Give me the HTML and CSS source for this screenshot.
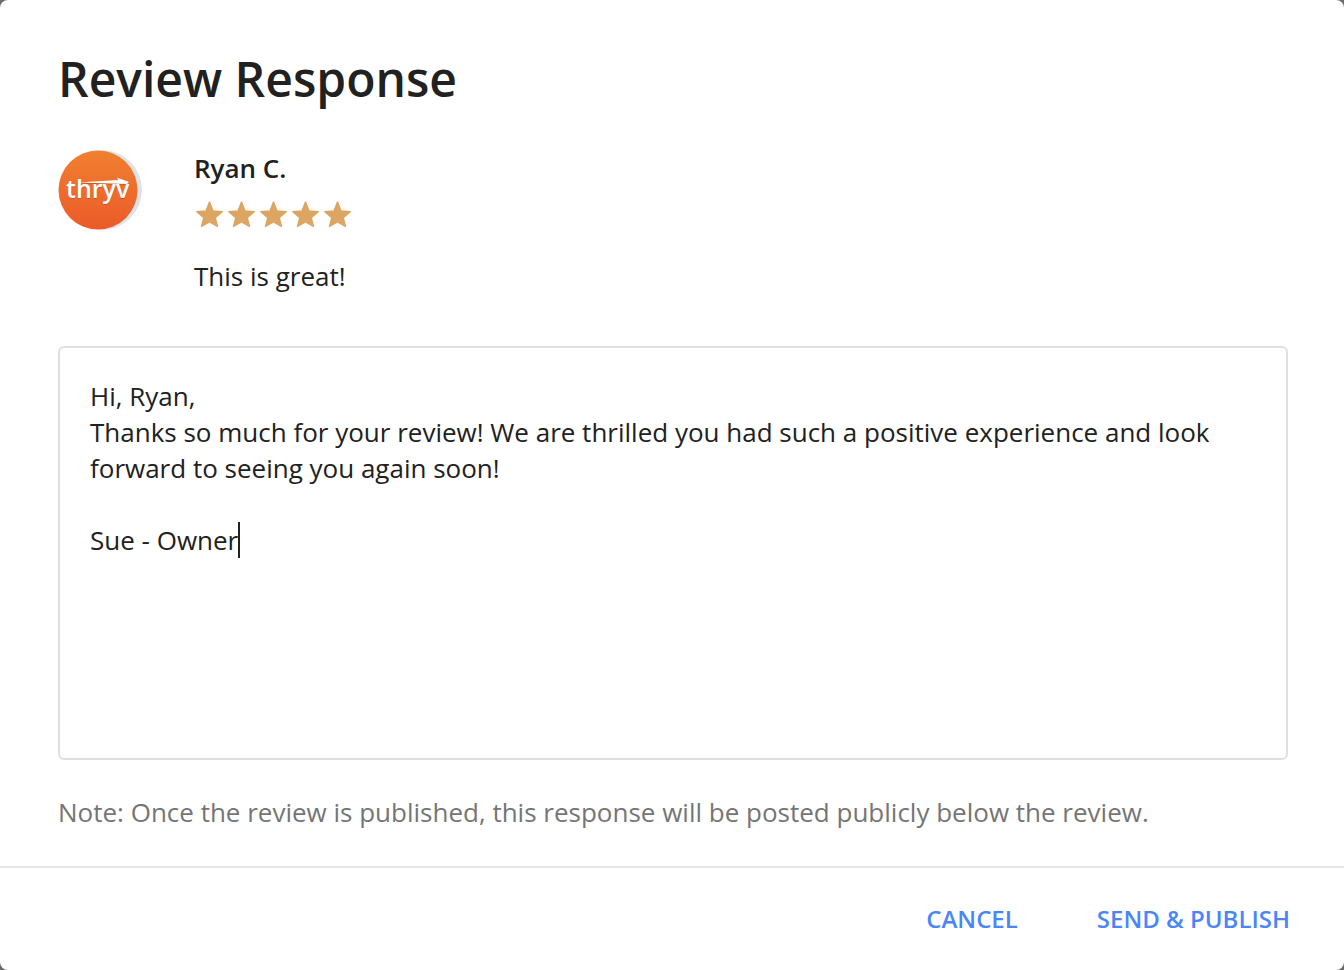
FILE: index.html
```html
<!DOCTYPE html>
<html lang="en">
<head>
<meta charset="utf-8">
<meta name="viewport" content="width=device-width, initial-scale=1">
<title>Review Response</title>
<link rel="stylesheet" href="styles.css">
</head>
<body>
<svg class="defs" aria-hidden="true">
  <symbol id="star" viewBox="0 0 32 32">
    <path d="M15.500 4 19 13 28.200 13.700 21.200 19.600 23.500 28.400 15.500 23.800 7.500 28.400 9.800 19.600 2.800 13.700 12 13Z" stroke-width="1.4" stroke-linejoin="round"/>
  </symbol>
</svg>
<form class="dialog" role="dialog" aria-labelledby="title">
  <main class="body">
    <h1 class="title" id="title">Review Response</h1>
    <section class="review">
      <svg class="avatar" viewBox="0 0 84 80" role="img" aria-label="thryv">
        <defs>
          <linearGradient id="orange" x1="0" y1="0" x2="0" y2="1">
            <stop offset="0" stop-color="#f08030"/>
            <stop offset="1" stop-color="#ec5a29"/>
          </linearGradient>
        </defs>
        <circle cx="44" cy="40" r="40" fill="#dfe3e9"/>
        <circle cx="40" cy="40" r="39.5" fill="url(#orange)"/>
        <g class="logo-shadow">
          <text class="logo-text" x="8" y="49">thryv</text>
          <path d="M20 33.500 60 31 59 28.500 71 33 69 35Z"/>
        </g>
        <g class="logo-mark">
          <text class="logo-text" x="8" y="48">thryv</text>
          <path d="M20 32.500 60 30 59 27.500 71 32 69 34Z"/>
        </g>
      </svg>
      <div class="details">
        <h2 class="author">Ryan C.</h2>
        <div class="stars" role="img" aria-label="5 out of 5 stars">
          <svg class="star"><use href="#star"/></svg>
          <svg class="star"><use href="#star"/></svg>
          <svg class="star"><use href="#star"/></svg>
          <svg class="star"><use href="#star"/></svg>
          <svg class="star"><use href="#star"/></svg>
        </div>
        <p class="comment">This is great!</p>
      </div>
    </section>
    <div class="field">
      <textarea class="response" id="response" aria-label="Your response" aria-describedby="note" spellcheck="false">Hi, Ryan,
Thanks so much for your review! We are thrilled you had such a positive experience and look forward to seeing you again soon!

Sue - Owner</textarea>
      <span class="caret" aria-hidden="true"></span>
    </div>
    <p class="note" id="note">Note: Once the review is published, this response will be posted publicly below the review.</p>
  </main>
  <footer class="actions">
    <button class="action" type="button">CANCEL</button>
    <button class="action" type="submit">SEND &amp; PUBLISH</button>
  </footer>
</form>
</body>
</html>
```
FILE: styles.css
```css
* {
  box-sizing: border-box;
}

body {
  margin: 0;
  background: #6b6b6b;
  color: #212121;
  font-family: "Open Sans", "Noto Sans", sans-serif;
  font-size: 26px;
  line-height: 36px;
}

.defs {
  position: absolute;
  width: 0;
  height: 0;
}

.dialog {
  display: flex;
  flex-direction: column;
  min-height: 100vh;
  background: #fff;
  border-radius: 8px;
}

.body {
  flex: 1;
  display: flex;
  flex-direction: column;
  padding: 46px 56px 36px 58px;
}

.title {
  margin: 0 0 38px;
  font-size: 48px;
  font-weight: 600;
  line-height: 66px;
}

.review {
  display: flex;
  gap: 52px;
  margin-bottom: 52px;
}

.avatar {
  flex: none;
  width: 84px;
  height: 80px;
}

.logo-text {
  font-family: "Open Sans", sans-serif;
  font-size: 25px;
  font-weight: 600;
}

.logo-mark {
  fill: #fff;
}

.logo-shadow {
  fill: #b8481c;
  opacity: 0.6;
}

.author {
  margin: 0 0 12px;
  font-size: 26px;
  font-weight: 600;
}

.stars {
  display: flex;
  margin-bottom: 28px;
}

.star {
  width: 32px;
  height: 32px;
  fill: #dca561;
  stroke: #dca561;
}

.comment,
.note {
  margin: 0;
}

.field {
  position: relative;
  flex: 1;
  display: flex;
  min-height: 240px;
  margin-bottom: 34px;
}

.response {
  flex: 1;
  padding: 30px;
  border: 2px solid #dfdfdf;
  border-radius: 6px;
  outline: 0;
  resize: none;
  background: transparent;
  color: inherit;
  font: inherit;
}

.caret {
  position: absolute;
  top: 176px;
  left: 180px;
  width: 2px;
  height: 36px;
  background: #212121;
}

.note {
  color: #757575;
}

.actions {
  display: flex;
  justify-content: flex-end;
  gap: 79px;
  padding: 33px 54px;
  border-top: 2px solid #e6e6e6;
}

.action {
  padding: 0;
  border: 0;
  background: none;
  color: #4a86f7;
  font: inherit;
  font-size: 24px;
  font-weight: 600;
  cursor: pointer;
}
```
